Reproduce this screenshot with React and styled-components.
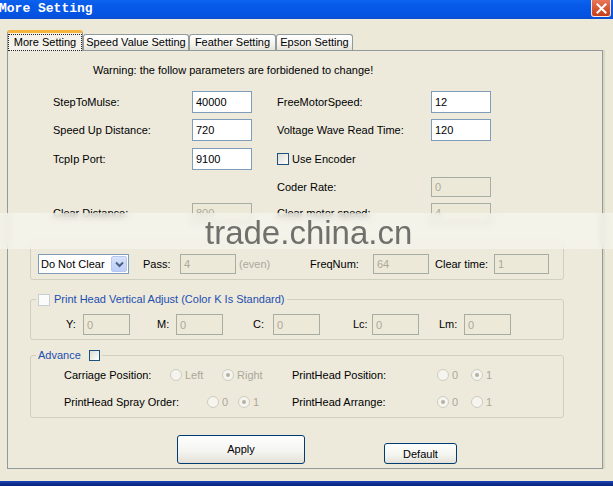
import React from 'react';
import styled, { createGlobalStyle } from 'styled-components';

const GlobalStyle = createGlobalStyle`
    html, body {
        margin: 0;
        padding: 0;
        background: #ECE9D8;
    }
    body {
        font-family: 'Liberation Sans', Arial, sans-serif;
        font-size: 11px;
        color: #000;
    }
    * {
        box-sizing: border-box;
    }
`;

const Window = styled.div`
    position: relative;
    width: 613px;
    height: 486px;
    overflow: hidden;
    display: flex;
    flex-direction: column;
    background: #ECE9D8;
`;

const TitleBar = styled.div`
    flex: none;
    height: 19px;
    display: flex;
    align-items: flex-start;
    justify-content: space-between;
    background: linear-gradient(180deg, #0B63EE 0%, #0759E8 30%, #0455E4 70%, #0A4ED4 100%);
`;

const TitleText = styled.div`
    margin: 1px 0 0 -1px;
    font-family: 'Liberation Mono', 'Courier New', monospace;
    font-weight: bold;
    font-size: 13px;
    line-height: 15px;
    color: #fff;
`;

const CloseButton = styled.div`
    width: 20px;
    height: 17px;
    margin-right: 2px;
    border: 1px solid rgba(255, 255, 255, 0.85);
    border-top: none;
    border-radius: 0 0 3px 3px;
    background: linear-gradient(180deg, #E8775A 0%, #D65632 55%, #C4401C 100%);
    display: flex;
    align-items: center;
    justify-content: center;
`;

const Body = styled.div`
    flex: 1;
    padding: 11px 0 0 7px;
    display: flex;
    flex-direction: column;
`;

const TabStrip = styled.div`
    position: relative;
    z-index: 1;
    height: 20px;
    display: flex;
    align-items: flex-end;
`;

const Tab = styled.div`
    width: ${p => p.$w}px;
    height: ${p => (p.$active ? 21 : 16)}px;
    margin-bottom: ${p => (p.$active ? -1 : 0)}px;
    border: 1px solid #919B9C;
    border-bottom: none;
    border-top: ${p => (p.$active ? '3px solid #F5B53A' : '1px solid #919B9C')};
    border-radius: 3px 3px 0 0;
    background: ${p => (p.$active ? '#F4F2EA' : 'linear-gradient(180deg, #FFFFFF 0%, #F4F3EE 60%, #E4E2D8 100%)')};
    display: flex;
    align-items: center;
    justify-content: center;
    font-size: 11px;
    line-height: 13px;
    white-space: nowrap;
`;

const FocusText = styled.span`
    outline: 1px dotted #222;
    padding: 1px 5px;
`;

const Pane = styled.div`
    width: 596px;
    height: 419px;
    border: 1px solid #919B9C;
    background: #EDEADC;
    box-shadow: 2px 0 0 #DAD7C8;
    display: flex;
    flex-direction: column;
`;

const Warning = styled.div`
    margin-top: 12px;
    padding-left: 85px;
    line-height: 14px;
`;

const FormBlock = styled.div`
    margin-top: 14px;
    padding-left: 45px;
    display: flex;
    flex-direction: column;
`;

const FormRow = styled.div`
    height: ${p => p.$h}px;
    margin-top: ${p => p.$mt || 0}px;
    display: grid;
    grid-template-columns: 139px 60px 25px 154px 60px;
    align-items: center;
`;

const Label = styled.span`
    flex: none;
    width: ${p => (p.$w ? `${p.$w}px` : 'auto')};
    margin-left: ${p => p.$ml || 0}px;
    color: ${p => (p.$muted ? '#ACA899' : '#000')};
    line-height: 13px;
    white-space: nowrap;
`;

const TextBox = styled.input`
    flex: none;
    width: ${p => p.$w || 60}px;
    height: ${p => p.$h || 22}px;
    margin: 0;
    padding: 0 3px;
    border: 1px solid ${p => (p.disabled ? '#A6ADA2' : '#7F9DB9')};
    border-radius: 0;
    background: ${p => (p.disabled ? '#ECE9D8' : '#fff')};
    color: ${p => (p.disabled ? '#ACA899' : '#000')};
    font-family: 'Liberation Sans', Arial, sans-serif;
    font-size: 11px;
    outline: none;
`;

const CheckRow = styled.div`
    grid-column: 4 / span 2;
    display: flex;
    align-items: center;
    gap: 3px;
`;

const CheckBox = styled.span`
    flex: none;
    width: ${p => p.$size || 12}px;
    height: ${p => p.$size || 12}px;
    margin-left: ${p => p.$ml || 0}px;
    border: 1px solid ${p => (p.$faint ? '#C8CED6' : '#1C5180')};
    background: ${p => (p.$faint ? '#FBFBFA' : 'linear-gradient(135deg, #DCDCD7 0%, #F4F4F0 70%, #FFFFFF 100%)')};
`;

const Group = styled.fieldset`
    width: 534px;
    min-width: 0;
    margin: ${p => p.$mt}px 0 0 22px;
    padding: ${p => p.$pt}px 0 ${p => p.$pb}px 0;
    border: 1px solid #D0D0BF;
    border-radius: 3px;
`;

const Legend = styled.legend`
    margin-left: 5px;
    padding: 0 2px;
    height: 13px;
`;

const LegendInner = styled.span`
    display: flex;
    align-items: center;
    height: 13px;
    color: #1D4EB0;
    line-height: 13px;
    gap: ${p => p.$gap || 4}px;
`;

const GroupRow = styled.div`
    height: ${p => p.$h}px;
    margin-top: ${p => p.$mt || 0}px;
    padding-left: ${p => p.$pl}px;
    display: flex;
    align-items: center;
`;

const Select = styled.div`
    flex: none;
    position: relative;
    width: 91px;
    height: 20px;
    border: 1px solid #7F9DB9;
    background: #fff;
    padding-left: 2px;
    display: flex;
    align-items: center;
    line-height: 13px;
`;

const SelectArrow = styled.span`
    position: absolute;
    top: 1px;
    right: 1px;
    width: 16px;
    height: 16px;
    border: 1px solid #B6C8F2;
    border-radius: 2px;
    background: linear-gradient(180deg, #D7E2FB 0%, #BCCFF7 100%);
    display: flex;
    align-items: center;
    justify-content: center;
`;

const RadioCell = styled.div`
    flex: none;
    width: ${p => p.$w}px;
    display: flex;
    align-items: center;
`;

const RadioOption = styled.span`
    flex: none;
    width: ${p => (p.$w ? `${p.$w}px` : 'auto')};
    display: flex;
    align-items: center;
    gap: 3px;
    color: #ACA899;
    line-height: 13px;
`;

const RadioDot = styled.span`
    flex: none;
    position: relative;
    width: 12px;
    height: 12px;
    border: 1px solid #CFCDC0;
    border-radius: 50%;
    background: #F5F4EF;

    &::after {
        content: '';
        display: ${p => (p.$checked ? 'block' : 'none')};
        position: absolute;
        left: 3px;
        top: 3px;
        width: 4px;
        height: 4px;
        border-radius: 50%;
        background: #B5B2A3;
    }
`;

const ButtonRow = styled.div`
    margin-top: 17px;
    padding-left: 169px;
    display: flex;
    align-items: flex-end;
    gap: 79px;
`;

const Button = styled.div`
    width: ${p => p.$w}px;
    height: ${p => p.$h}px;
    border: 1px solid #003C74;
    border-radius: 3px;
    background: linear-gradient(180deg, #FFFFFF 0%, #F3F3EF 60%, #E3E0D6 100%);
    display: flex;
    align-items: center;
    justify-content: center;
    padding-top: ${p => p.$pt || 0}px;
    line-height: 13px;
`;

const BottomEdge = styled.div`
    flex: none;
    height: 5px;
    background: linear-gradient(180deg, #2146B4 0%, #0C2C8E 60%, #0A2678 100%);
`;

const WatermarkBand = styled.div`
    position: absolute;
    left: 0;
    right: 0;
    top: 213px;
    height: 36px;
    background: rgba(249, 248, 242, 0.6);
    backdrop-filter: blur(3px);
`;

const WatermarkText = styled.div`
    position: absolute;
    left: 205px;
    top: 216px;
    font-family: 'Liberation Sans', Arial, sans-serif;
    font-size: 33px;
    line-height: 33px;
    color: rgba(88, 88, 86, 0.85);
    white-space: nowrap;
`;

const tabs = [
    { name: 'More Setting', w: 76, active: true },
    { name: 'Speed Value Setting', w: 106 },
    { name: 'Feather Setting', w: 87 },
    { name: 'Epson Setting', w: 77 },
];

const headFields = [
    { name: 'Y:', ml: 0, lw: 17 },
    { name: 'M:', ml: 27, lw: 19 },
    { name: 'C:', ml: 30, lw: 20 },
    { name: 'Lc:', ml: 33, lw: 19 },
    { name: 'Lm:', ml: 20, lw: 25 },
];

const Radios = ({ options, checked, w }) => (
    <>
        {options.map((o, i) => (
            <RadioOption key={o} $w={w}>
                <RadioDot $checked={i === checked} />
                {o}
            </RadioOption>
        ))}
    </>
);

const App = () => (
    <Window>
        <GlobalStyle />
        <TitleBar>
            <TitleText>More Setting</TitleText>
            <CloseButton>
                <svg width="11" height="11" viewBox="0 0 11 11">
                    <path d="M1.5 1.5 L9.5 9.5 M9.5 1.5 L1.5 9.5" stroke="#fff" strokeWidth="2" strokeLinecap="square" />
                </svg>
            </CloseButton>
        </TitleBar>
        <Body>
            <TabStrip>
                {tabs.map(t => (
                    <Tab key={t.name} $w={t.w} $active={t.active}>
                        {t.active ? <FocusText>{t.name}</FocusText> : t.name}
                    </Tab>
                ))}
            </TabStrip>
            <Pane>
                <Warning>Warning: the follow parameters are forbidened to change!</Warning>
                <FormBlock>
                    <FormRow $h={22}>
                        <Label>StepToMulse:</Label>
                        <TextBox readOnly value="40000" />
                        <span />
                        <Label>FreeMotorSpeed:</Label>
                        <TextBox readOnly value="12" />
                    </FormRow>
                    <FormRow $h={22} $mt={6}>
                        <Label>Speed Up Distance:</Label>
                        <TextBox readOnly value="720" />
                        <span />
                        <Label>Voltage Wave Read Time:</Label>
                        <TextBox readOnly value="120" />
                    </FormRow>
                    <FormRow $h={22} $mt={7}>
                        <Label>TcpIp Port:</Label>
                        <TextBox readOnly value="9100" />
                        <span />
                        <CheckRow>
                            <CheckBox />
                            <Label>Use Encoder</Label>
                        </CheckRow>
                    </FormRow>
                    <FormRow $h={20} $mt={7}>
                        <span />
                        <span />
                        <span />
                        <Label>Coder Rate:</Label>
                        <TextBox disabled $h={20} value="0" />
                    </FormRow>
                    <FormRow $h={20} $mt={6}>
                        <Label>Clear Distance:</Label>
                        <TextBox disabled $h={20} value="800" />
                        <span />
                        <Label>Clear motor speed:</Label>
                        <TextBox disabled $h={20} value="4" />
                    </FormRow>
                </FormBlock>

                <Group $mt={21} $pt={9} $pb={5}>
                    <GroupRow $h={20} $pl={7}>
                        <Select>
                            Do Not Clear
                            <SelectArrow>
                                <svg width="9" height="7" viewBox="0 0 9 7">
                                    <path d="M1 1.5 L4.5 5 L8 1.5" fill="none" stroke="#4D6185" strokeWidth="2" />
                                </svg>
                            </SelectArrow>
                        </Select>
                        <Label $ml={14} $w={37}>Pass:</Label>
                        <TextBox disabled $w={56} $h={20} value="4" />
                        <Label $ml={3} $w={71} $muted>(even)</Label>
                        <Label $w={63}>FreqNum:</Label>
                        <TextBox disabled $w={56} $h={20} value="64" />
                        <Label $ml={6} $w={59}>Clear time:</Label>
                        <TextBox disabled $w={55} $h={20} value="1" />
                    </GroupRow>
                </Group>

                <Group $mt={13} $pt={8} $pb={4}>
                    <Legend>
                        <LegendInner>
                            <CheckBox $faint />
                            Print Head Vertical Adjust (Color K Is Standard)
                        </LegendInner>
                    </Legend>
                    <GroupRow $h={21} $pl={35}>
                        {headFields.map(f => (
                            <React.Fragment key={f.name}>
                                <Label $ml={f.ml} $w={f.lw}>{f.name}</Label>
                                <TextBox disabled $w={47} $h={21} value="0" />
                            </React.Fragment>
                        ))}
                    </GroupRow>
                </Group>

                <Group $mt={9} $pt={5} $pb={7}>
                    <Legend>
                        <LegendInner $gap={8}>
                            Advance
                            <CheckBox $size={11} />
                        </LegendInner>
                    </Legend>
                    <GroupRow $h={16} $pl={33}>
                        <RadioCell $w={228}>
                            <Label $w={106}>Carriage Position:</Label>
                            <Radios options={['Left', 'Right']} checked={1} w={52} />
                        </RadioCell>
                        <RadioCell $w={240}>
                            <Label $w={145}>PrintHead Position:</Label>
                            <Radios options={['0', '1']} checked={1} w={34} />
                        </RadioCell>
                    </GroupRow>
                    <GroupRow $h={16} $mt={11} $pl={33}>
                        <RadioCell $w={228}>
                            <Label $w={143}>PrintHead Spray Order:</Label>
                            <Radios options={['0', '1']} checked={1} w={31} />
                        </RadioCell>
                        <RadioCell $w={240}>
                            <Label $w={145}>PrintHead Arrange:</Label>
                            <Radios options={['0', '1']} checked={0} w={34} />
                        </RadioCell>
                    </GroupRow>
                </Group>

                <ButtonRow>
                    <Button $w={128} $h={29}>Apply</Button>
                    <Button $w={73} $h={21} $pt={1}>Default</Button>
                </ButtonRow>
            </Pane>
        </Body>
        <BottomEdge />
        <WatermarkBand />
        <WatermarkText>trade.china.cn</WatermarkText>
    </Window>
);

export default App;
